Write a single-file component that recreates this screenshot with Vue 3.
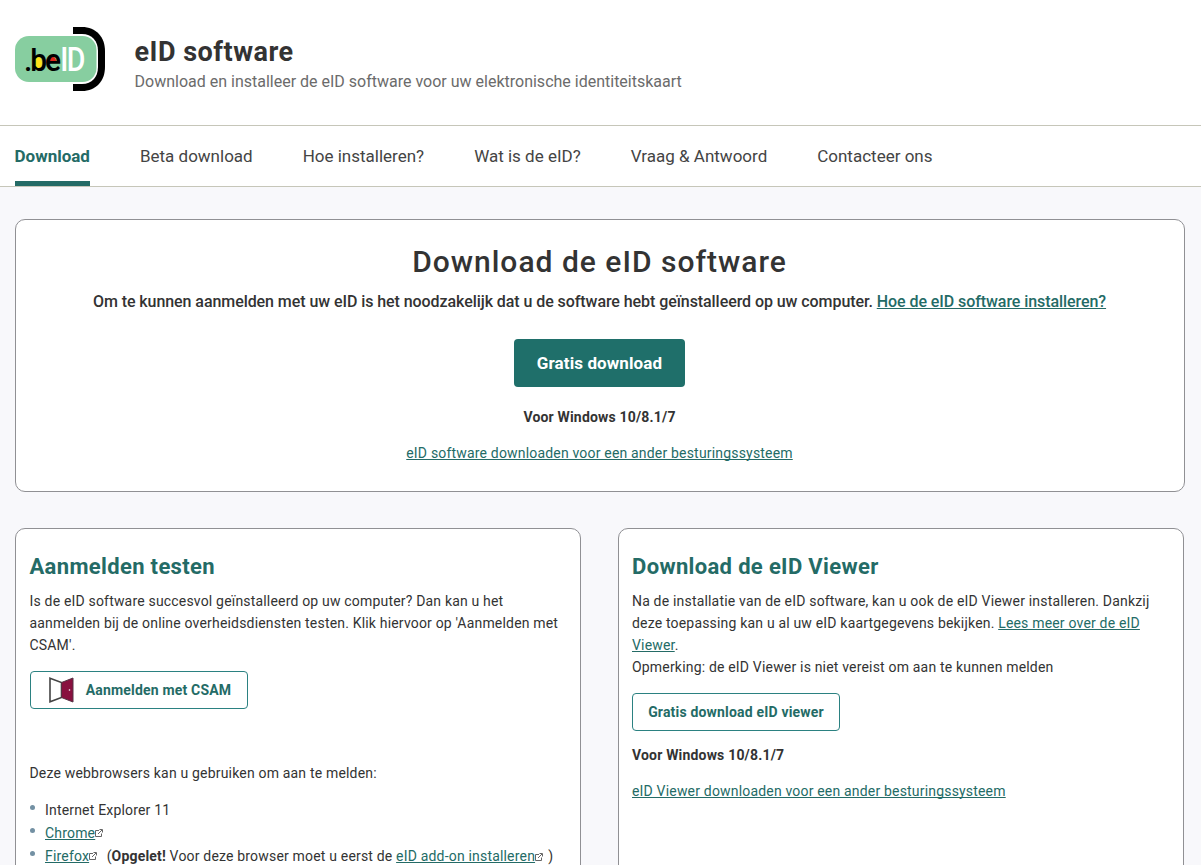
<template>
    <div class="page">
        <header class="site-head">
            <svg class="logo" viewBox="0 0 92 66" role="img" aria-label="beID">
                <path d="M58 0H67C81 0 90 10 90 24V40C90 54 81 64 67 64H58Z" fill="#000" />
                <path d="M58 7H67C77 7 83 14 83 24V40C83 50 77 57 67 57H58Z" fill="#fff" />
                <rect x="0" y="9" width="81.500" height="46" rx="14" fill="#87cea0" />
                <ellipse cx="22.500" cy="36" rx="4.500" ry="7" fill="#ffe01a" />
                <path d="M31 35.500a5 6 0 0 1 10.500 0Z" fill="#e2231a" />
                <text class="logo-be" transform="translate(9 43.500) scale(.97 1)">.be</text>
                <text class="logo-id" transform="translate(45.300 43.500) scale(.84 1)">ID</text>
            </svg>
            <div class="site-title">
                <h1>eID software</h1>
                <p>Download en installeer de eID software voor uw elektronische identiteitskaart</p>
            </div>
        </header>
        <nav class="site-nav">
            <a v-for="item in menu" :key="item" href="#" :class="{ active: item === current }">{{ item }}</a>
        </nav>
        <main class="content">
            <section class="card hero">
                <h2>Download de eID software</h2>
                <p class="intro">Om te kunnen aanmelden met uw eID is het noodzakelijk dat u de software hebt geïnstalleerd op uw computer. <a href="#">Hoe de eID software installeren?</a></p>
                <a href="#" class="btn-primary">Gratis download</a>
                <p class="platform">Voor Windows 10/8.1/7</p>
                <p class="other"><a href="#">eID software downloaden voor een ander besturingssysteem</a></p>
            </section>
            <div class="columns">
                <section class="card column">
                    <h3>Aanmelden testen</h3>
                    <p>Is de eID software succesvol geïnstalleerd op uw computer? Dan kan u het<br>aanmelden bij de online overheidsdiensten testen. Klik hiervoor op 'Aanmelden met<br>CSAM'.</p>
                    <a href="#" class="btn-outline csam">
                        <svg class="csam-icon" viewBox="0 0 25 26">
                            <path d="M1 1.200L12.500 5.500V20.500L1 24.800Z" fill="#fff" stroke="#444" stroke-width="1.600" />
                            <path d="M12.500 5.500L24 1V25L12.500 20.500Z" fill="#88103f" stroke="#553344" stroke-width="1" />
                            <circle cx="20.500" cy="13" r=".8" fill="#fff" />
                        </svg>
                        Aanmelden met CSAM
                    </a>
                    <p class="browsers-intro">Deze webbrowsers kan u gebruiken om aan te melden:</p>
                    <ul class="browsers">
                        <li v-for="b in browsers" :key="b.name">
                            <template v-if="b.link"><a href="#">{{ b.name }}</a><svg class="ext" viewBox="0 0 8 8"><path d="M4 1.500H.5V7.500H6.500V4.500M3 5L7 1M4.500 .5H7.500V3.500" /></svg></template>
                            <template v-else>{{ b.name }}</template>
                            <span v-if="b.addon" class="note">(<b>Opgelet!</b> Voor deze browser moet u eerst de <a href="#">eID add-on installeren</a><svg class="ext" viewBox="0 0 8 8"><path d="M4 1.500H.5V7.500H6.500V4.500M3 5L7 1M4.500 .5H7.500V3.500" /></svg> )</span>
                        </li>
                    </ul>
                </section>
                <section class="card column viewer">
                    <h3>Download de eID Viewer</h3>
                    <p>Na de installatie van de eID software, kan u ook de eID Viewer installeren. Dankzij<br>deze toepassing kan u al uw eID kaartgegevens bekijken. <a href="#">Lees meer over de eID<br>Viewer</a>.<br>Opmerking: de eID Viewer is niet vereist om aan te kunnen melden</p>
                    <a href="#" class="btn-outline">Gratis download eID viewer</a>
                    <p class="platform">Voor Windows 10/8.1/7</p>
                    <p class="other"><a href="#">eID Viewer downloaden voor een ander besturingssysteem</a></p>
                </section>
            </div>
        </main>
    </div>
</template>
<script setup>
    import { ref } from 'vue';

    const menu = ['Download', 'Beta download', 'Hoe installeren?', 'Wat is de eID?', 'Vraag & Antwoord', 'Contacteer ons'];
    const current = ref('Download');

    const browsers = [
        { name: 'Internet Explorer 11' },
        { name: 'Chrome', link: true },
        { name: 'Firefox', link: true, addon: true },
    ];
</script>
<style>
    body {
        margin: 0;
        background: #f8f8fb;
    }
</style>
<style scoped>
    .page {
        height: 865px;
        overflow: hidden;
        font-family: Roboto, "Liberation Sans", sans-serif;
        font-size: 14px;
        line-height: 22px;
        letter-spacing: 0.183px;
        color: #333;
    }
    h1, h2, h3, p, ul {
        margin: 0;
        padding: 0;
    }
    a {
        color: #246b66;
        text-underline-offset: 1px;
        text-decoration-thickness: 1px;
        text-decoration-skip-ink: none;
    }
    .site-head {
        display: flex;
        box-sizing: border-box;
        height: 126px;
        padding: 27px 15px 0;
        gap: 27.5px;
        background: #fff;
        border-bottom: 1px solid #c6c6b9;
    }
    .logo {
        width: 92px;
        height: 66px;
    }
    .logo-be, .logo-id {
        font-family: Roboto, sans-serif;
        font-size: 31px;
        font-weight: 500;
        letter-spacing: -2.2px;
    }
    .logo-id {
        font-size: 34px;
        fill: #fff;
        letter-spacing: -2px;
    }
    .site-title {
        padding-top: 8px;
    }
    .site-title h1 {
        font-size: 27px;
        line-height: 34px;
        font-weight: 700;
        letter-spacing: 0.5px;
    }
    .site-title p {
        margin-top: 2px;
        font-size: 16px;
        letter-spacing: 0;
        color: #6b6b6b;
    }
    .site-nav {
        display: flex;
        box-sizing: border-box;
        height: 61px;
        padding: 0 14.5px;
        gap: 50px;
        background: #fff;
        border-bottom: 1px solid #c6c6b9;
    }
    .site-nav a {
        box-sizing: border-box;
        height: 60px;
        line-height: 61px;
        font-size: 17px;
        letter-spacing: 0;
        color: #444;
        text-decoration: none;
    }
    .site-nav a.active {
        font-weight: 700;
        color: #246b66;
        border-bottom: 5px solid #246b66;
    }
    .content {
        padding: 32px 16px 0 15px;
    }
    .card {
        box-sizing: border-box;
        background: #fff;
        border: 1px solid #909094;
        border-radius: 10px;
    }
    .hero {
        height: 273px;
        padding: 22px 1px 0 0;
        text-align: center;
    }
    .hero h2 {
        font-size: 30px;
        line-height: 40px;
        font-weight: 500;
        letter-spacing: 1px;
    }
    .intro {
        margin-top: 9px;
        font-size: 16px;
        font-weight: 500;
        letter-spacing: -0.07px;
    }
    .btn-primary {
        display: inline-block;
        box-sizing: border-box;
        width: 171px;
        height: 48px;
        margin-top: 26px;
        line-height: 48px;
        font-size: 17px;
        font-weight: 700;
        letter-spacing: 0.1px;
        color: #fff;
        text-decoration: none;
        background: #1f6f6a;
        border-radius: 4px;
    }
    .platform {
        margin-top: 13px;
        font-weight: 700;
    }
    .other {
        margin-top: 14px;
    }
    .hero .platform {
        margin-top: 19px;
    }
    .columns {
        display: grid;
        grid-template-columns: 566px 566px;
        column-gap: 37px;
        margin-top: 36px;
    }
    .column {
        height: 400px;
        padding: 23px 13px 0 13.5px;
    }
    .viewer {
        padding-left: 13px;
    }
    .column h3 {
        margin-bottom: 8px;
        font-size: 22px;
        line-height: 30px;
        font-weight: 700;
        letter-spacing: 0.34px;
        color: #246b66;
    }
    .column > p {
        white-space: nowrap;
    }
    .btn-outline {
        display: flex;
        align-items: center;
        justify-content: center;
        box-sizing: border-box;
        width: 208px;
        height: 38px;
        margin-top: 15px;
        font-weight: 700;
        text-decoration: none;
        border: 1px solid #2b8181;
        border-radius: 4px;
    }
    .csam {
        width: 218px;
        gap: 12px;
        padding-left: 3px;
    }
    .csam-icon {
        width: 25px;
        height: 26px;
    }
    .browsers-intro {
        margin-top: 53px;
    }
    .browsers {
        margin-top: 14px;
        list-style: none;
    }
    .browsers li {
        display: flex;
        align-items: center;
        height: 23px;
        white-space: pre;
    }
    .browsers li::before {
        content: "";
        width: 5px;
        height: 5px;
        margin: -4px 10.5px 0 0;
        border-radius: 50%;
        background: #7390a3;
    }
    .ext {
        width: 8px;
        height: 8px;
        fill: none;
        stroke: #666;
        stroke-width: 1;
    }
    .note {
        margin-left: 9.5px;
    }
    .note .ext {
        margin-right: 1.5px;
    }
</style>
